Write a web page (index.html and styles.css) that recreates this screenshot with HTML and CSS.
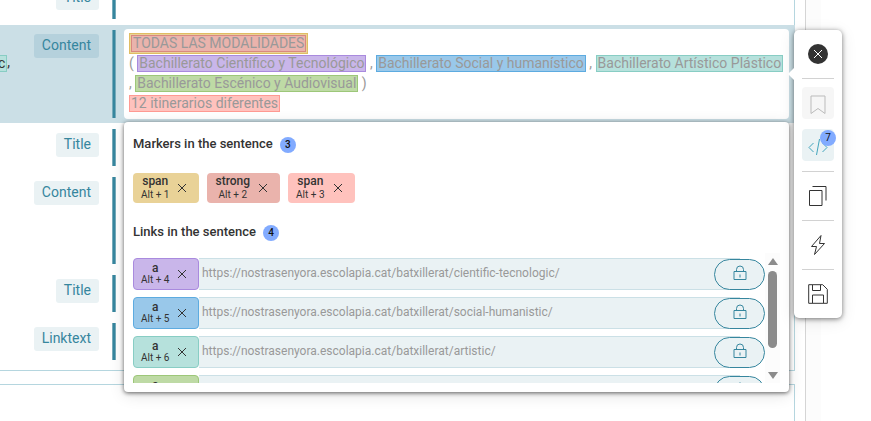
FILE: index.html
```html
<!DOCTYPE html>
<html lang="es">
<head>
  <meta charset="UTF-8" />
  <meta name="viewport" content="width=device-width, initial-scale=1.0"/>
  <title>Sentence editor</title>
  <link rel="stylesheet" href="styles.css">
</head>
<body>
  <!-- Shared icons -->
  <svg class="sprite" aria-hidden="true">
    <symbol id="cross" viewBox="0 0 10 10"><path d="M1 1l8 8M9 1l-8 8" /></symbol>
    <symbol id="lock" viewBox="0 0 14 16"><path d="M1 6.500h12v8H1zM3.500 6V4.500a3.500 3.500 0 0 1 7 0V6M7 9.500v3" /></symbol>
  </svg>

  <div class="page">
    <main class="segments">
      <section class="card first">
        <div class="row short">
          <span></span>
          <span class="type">Title</span>
          <span class="bar"></span>
        </div>

        <div class="row active">
          <span class="source"><mark class="teal">c</mark>,</span>
          <span class="type">Content</span>
          <span class="bar"></span>
          <div class="edit">
            <div class="field" contenteditable="true" spellcheck="false">
              <div><mark class="sand"><mark class="brick">TODAS LAS MODALIDADES</mark></mark></div>
              <div>( <mark class="purple">Bachillerato Científico y Tecnológico</mark> , <mark class="blue">Bachillerato Social y humanístico</mark> , <mark class="teal">Bachillerato Artístico Plástico</mark></div>
              <div>, <mark class="green">Bachillerato Escénico y Audiovisual</mark> )</div>
              <div><mark class="pink">12 itinerarios diferentes</mark></div>
            </div>

            <div class="popover">
              <h2>Markers in the sentence <span class="count">3</span></h2>
              <div class="markers">
                <button class="tag sand"><span class="keys"><b>span</b><small>Alt + 1</small></span><svg><use href="#cross" /></svg></button>
                <button class="tag brick"><span class="keys"><b>strong</b><small>Alt + 2</small></span><svg><use href="#cross" /></svg></button>
                <button class="tag pink"><span class="keys"><b>span</b><small>Alt + 3</small></span><svg><use href="#cross" /></svg></button>
              </div>

              <h2>Links in the sentence <span class="count">4</span></h2>
              <div class="scroller">
                <div class="links">
                  <div class="link">
                    <button class="tag purple"><span class="keys"><b>a</b><small>Alt + 4</small></span><svg><use href="#cross" /></svg></button>
                    <input type="text" aria-label="Link 4" readonly value="https://nostrasenyora.escolapia.cat/batxillerat/cientific-tecnologic/">
                    <button class="lock" aria-label="Unlock link 4"><svg><use href="#lock" /></svg></button>
                  </div>
                  <div class="link">
                    <button class="tag blue"><span class="keys"><b>a</b><small>Alt + 5</small></span><svg><use href="#cross" /></svg></button>
                    <input type="text" aria-label="Link 5" readonly value="https://nostrasenyora.escolapia.cat/batxillerat/social-humanistic/">
                    <button class="lock" aria-label="Unlock link 5"><svg><use href="#lock" /></svg></button>
                  </div>
                  <div class="link">
                    <button class="tag teal"><span class="keys"><b>a</b><small>Alt + 6</small></span><svg><use href="#cross" /></svg></button>
                    <input type="text" aria-label="Link 6" readonly value="https://nostrasenyora.escolapia.cat/batxillerat/artistic/">
                    <button class="lock" aria-label="Unlock link 6"><svg><use href="#lock" /></svg></button>
                  </div>
                  <div class="link">
                    <button class="tag green"><span class="keys"><b>a</b><small>Alt + 7</small></span><svg><use href="#cross" /></svg></button>
                    <input type="text" aria-label="Link 7" readonly>
                    <button class="lock" aria-label="Unlock link 7"><svg><use href="#lock" /></svg></button>
                  </div>
                </div>
                <div class="scrollbar">
                  <span class="up"></span>
                  <span class="thumb"></span>
                  <span class="down"></span>
                </div>
              </div>
            </div>

            <div class="tools">
              <button aria-label="Close">
                <svg width="20" height="20" viewBox="0 0 20 20"><circle cx="10" cy="10" r="10" fill="#333" stroke="none" /><path d="M6 6l8 8M14 6l-8 8" stroke="#fff" /></svg>
              </button>
              <hr>
              <div class="tiles">
                <button class="tile" aria-label="Bookmark" disabled>
                  <svg width="16" height="20" viewBox="0 0 16 20"><path d="M1 1h14v17.500l-7-5-7 5z" stroke="#bbb" /></svg>
                </button>
                <button class="tile on" aria-label="Markup">
                  <svg width="20" height="18" viewBox="0 0 20 18"><path d="M5.500 5L1 9.500 5.500 14M14.500 5l4.500 4.500-4.500 4.500M11.500 1l-3 16" stroke="#43a5bd" /></svg>
                  <span class="count">7</span>
                </button>
              </div>
              <hr>
              <button aria-label="Copy">
                <svg width="20" height="22" viewBox="0 0 20 22"><path d="M1.500 5.500h12.500v15H1.500zM4.500 1.500h13.500v14" /></svg>
              </button>
              <hr>
              <button aria-label="Quick action">
                <svg width="16" height="22" viewBox="0 0 16 22"><path d="M11 1.500L1.500 12.500h5L4.500 20.500 14.500 9.500H9.500z" /></svg>
              </button>
              <hr>
              <button aria-label="Save">
                <svg width="20" height="20" viewBox="0 0 20 20"><path d="M.7.7h14l4.600 4.600v14H.7zM4.500 1v5.500h8V1M4.500 19v-8h11v8" /></svg>
              </button>
            </div>
          </div>
        </div>

        <div class="row short">
          <span></span>
          <span class="type">Title</span>
          <span class="bar"></span>
        </div>
        <div class="row tall">
          <span></span>
          <span class="type">Content</span>
          <span class="bar"></span>
        </div>
        <div class="row short">
          <span></span>
          <span class="type">Title</span>
          <span class="bar"></span>
        </div>
        <div class="row short">
          <span></span>
          <span class="type">Linktext</span>
          <span class="bar"></span>
        </div>
      </section>
      <section class="card next"></section>
    </main>
    <div class="track"></div>
  </div>
</body>
</html>
```
FILE: styles.css
```css
* {
  box-sizing: border-box;
}

body {
  margin: 0;
  font-family: Roboto, "Liberation Sans", sans-serif;
  font-size: 14px;
  line-height: 20px;
  color: #333;
  background: #fff;
  overflow: hidden;
}

button {
  font: inherit;
  color: inherit;
  background: none;
  border: 0;
  padding: 0;
  cursor: pointer;
}

svg {
  display: block;
  flex: none;
  fill: none;
  stroke: #333;
}

.sprite {
  position: absolute;
  width: 0;
  height: 0;
}

/* Page frame */
.page {
  display: flex;
  height: 100vh;
  padding-right: 50px;
}

.segments {
  flex: 1;
  min-width: 0;
  display: flex;
  flex-direction: column;
  gap: 13px;
  padding-right: 10px;
  border-right: 1px solid #d5d5d5;
}

.track {
  width: 15px;
  background: #fcfcfc;
}

.card {
  border: 1px solid #b5d6df;
  border-left: 0;
}

.card.first {
  display: grid;
  grid-template-columns: minmax(0, 1fr);
  gap: 1px;
  margin-top: -24px;
  padding-bottom: 5px;
}

.card.next {
  flex: 1;
  border-bottom: 0;
}

.row {
  display: grid;
  grid-template-columns: 10px 89px 17px minmax(0, 1fr);
  padding: 5px 0;
}

.row.short {
  min-height: 47px;
}

.row.tall {
  min-height: 97px;
}

.row.active {
  min-height: 98px;
  padding: 5px 6px 5px 0;
  margin-right: -1px;
  background: #cbdfe6;
}

.source {
  display: flex;
  justify-content: flex-end;
  padding-top: 22px;
  overflow: hidden;
}

.source mark {
  height: 17px;
  margin-top: 3px;
}

.type {
  justify-self: end;
  align-self: start;
  margin-top: 4px;
  padding: 1px 8px 3px;
  border-radius: 3px;
  background: #eaf2f4;
  color: #36869e;
}

.active .type {
  background: #b5d1dc;
}

.bar {
  margin-left: 13px;
  background: #36869e;
  border: solid #76abbb;
  border-width: 0 1px;
}

/* Sentence being edited */
.edit {
  position: relative;
  margin: -1px 0 -1px 8px;
}

.field {
  height: 90px;
  padding: 4px 5px;
  border-radius: 4px;
  background: #fff;
  color: #999;
  white-space: nowrap;
  outline: 0;
}

.field > div {
  height: 20px;
}

mark {
  color: inherit;
  border: 1px solid;
  padding: 0 1px;
  line-height: 15px;
}

.field mark {
  display: inline-block;
}

.field mark.sand {
  padding: 1px;
}

.sand { background: #e9d297; border-color: #e0bd63; }
.brick { background: #eab3ac; border-color: #d98880; }
.pink { background: #ffc2bd; border-color: #ff9a93; }
.purple { background: #c9b6ea; border-color: #a98ade; }
.blue { background: #99c8ea; border-color: #5dabe0; }
.teal { background: #b6e1dc; border-color: #88cdc4; }
.green { background: #bedaa5; border-color: #9dc779; }

/* Panel with markers and links */
.popover {
  position: absolute;
  top: 93px;
  left: 0;
  right: 0;
  z-index: 1;
  padding: 12px 9px 9px;
  border-radius: 4px;
  background: #fff;
  box-shadow: 0 1px 4px rgba(0, 0, 0, 0.6), 0 3px 16px rgba(0, 0, 0, 0.12);
}

h2 {
  display: flex;
  align-items: center;
  gap: 7px;
  height: 20px;
  margin: 0;
  font-size: 13px;
  font-weight: 500;
}

.count {
  width: 16px;
  height: 16px;
  border-radius: 50%;
  background: #82abff;
  color: #111;
  font-size: 10px;
  line-height: 16px;
  text-align: center;
}

h2 .count {
  margin-top: 2px;
}

.markers {
  display: flex;
  gap: 8px;
  margin: 19px 0;
}

.tag {
  display: flex;
  align-items: center;
  gap: 8px;
  height: 30px;
  padding: 0 12px 0 8px;
  border-radius: 4px;
  white-space: nowrap;
}

.tag svg {
  width: 10px;
  height: 10px;
}

.keys {
  display: grid;
  text-align: center;
}

.keys b {
  font-size: 12px;
  line-height: 14px;
  font-weight: 500;
}

.keys small {
  font-size: 10px;
  line-height: 14px;
}

.scroller {
  display: flex;
  height: 130px;
  margin-top: 11px;
  overflow: hidden;
}

.links {
  flex: 1;
  display: flex;
  flex-direction: column;
  gap: 7px;
  padding-top: 5px;
}

.link {
  flex: none;
  display: flex;
  height: 32px;
}

.link .tag {
  width: 66px;
  height: 32px;
  padding: 0 11px 0 7px;
  border-width: 1px;
  border-style: solid;
}

.link .keys b,
.link .keys small {
  line-height: 12px;
}

.link input {
  flex: 1;
  min-width: 0;
  margin-right: -26px;
  padding: 0 26px 2px 3px;
  border: solid #cbe0e6;
  border-width: 1px 0;
  background: #eaf2f4;
  color: #999;
  font: 12px Roboto, "Liberation Sans", sans-serif;
  outline: 0;
}

.lock {
  z-index: 1;
  display: grid;
  justify-items: center;
  width: 51px;
  height: 31px;
  margin-top: 1px;
  padding-top: 5px;
  border: 1px solid #36869e;
  border-radius: 16px;
  background: #eaf2f4;
}

.lock svg {
  width: 14px;
  height: 16px;
  stroke: #36869e;
}

.scrollbar {
  display: flex;
  flex-direction: column;
  align-items: center;
  width: 15px;
  padding: 5px 0 4px;
  background: #fcfcfc;
}

.up,
.down {
  border: solid transparent;
  border-width: 0 5px;
}

.up {
  border-bottom: 7px solid #8b8b8b;
}

.down {
  margin-top: auto;
  border-top: 7px solid #8b8b8b;
}

.thumb {
  width: 9px;
  height: 77px;
  margin-top: 6px;
  border-radius: 5px;
  background: #8b8b8b;
}

/* Toolbar beside the sentence */
.tools {
  position: absolute;
  top: 1px;
  left: 100%;
  z-index: 2;
  width: 48px;
  margin-left: 5px;
  border-radius: 5px;
  background: #fff;
  box-shadow: 0 1px 5px rgba(0, 0, 0, 0.5), 0 3px 16px rgba(0, 0, 0, 0.1);
}

.tools::before {
  content: "";
  position: absolute;
  top: 38px;
  right: 100%;
  border: 6px solid transparent;
  border-left: 0;
  border-right-color: #fff;
}

.tools button {
  display: grid;
  place-items: center;
  width: 48px;
  height: 48px;
}

.tools hr {
  height: 1px;
  margin: 0 8px;
  border: 0;
  background: #d2d2d2;
}

.tiles {
  display: grid;
  gap: 10px;
  padding: 8px 8px 10px;
}

.tools .tile {
  position: relative;
  width: 32px;
  height: 32px;
  border-radius: 4px;
  background: #f6f6f6;
}

.tile svg {
  margin-top: 4px;
}

.tools .on {
  background: #eaf2f4;
}

.tile .count {
  position: absolute;
  top: 1px;
  right: -2px;
}
```
